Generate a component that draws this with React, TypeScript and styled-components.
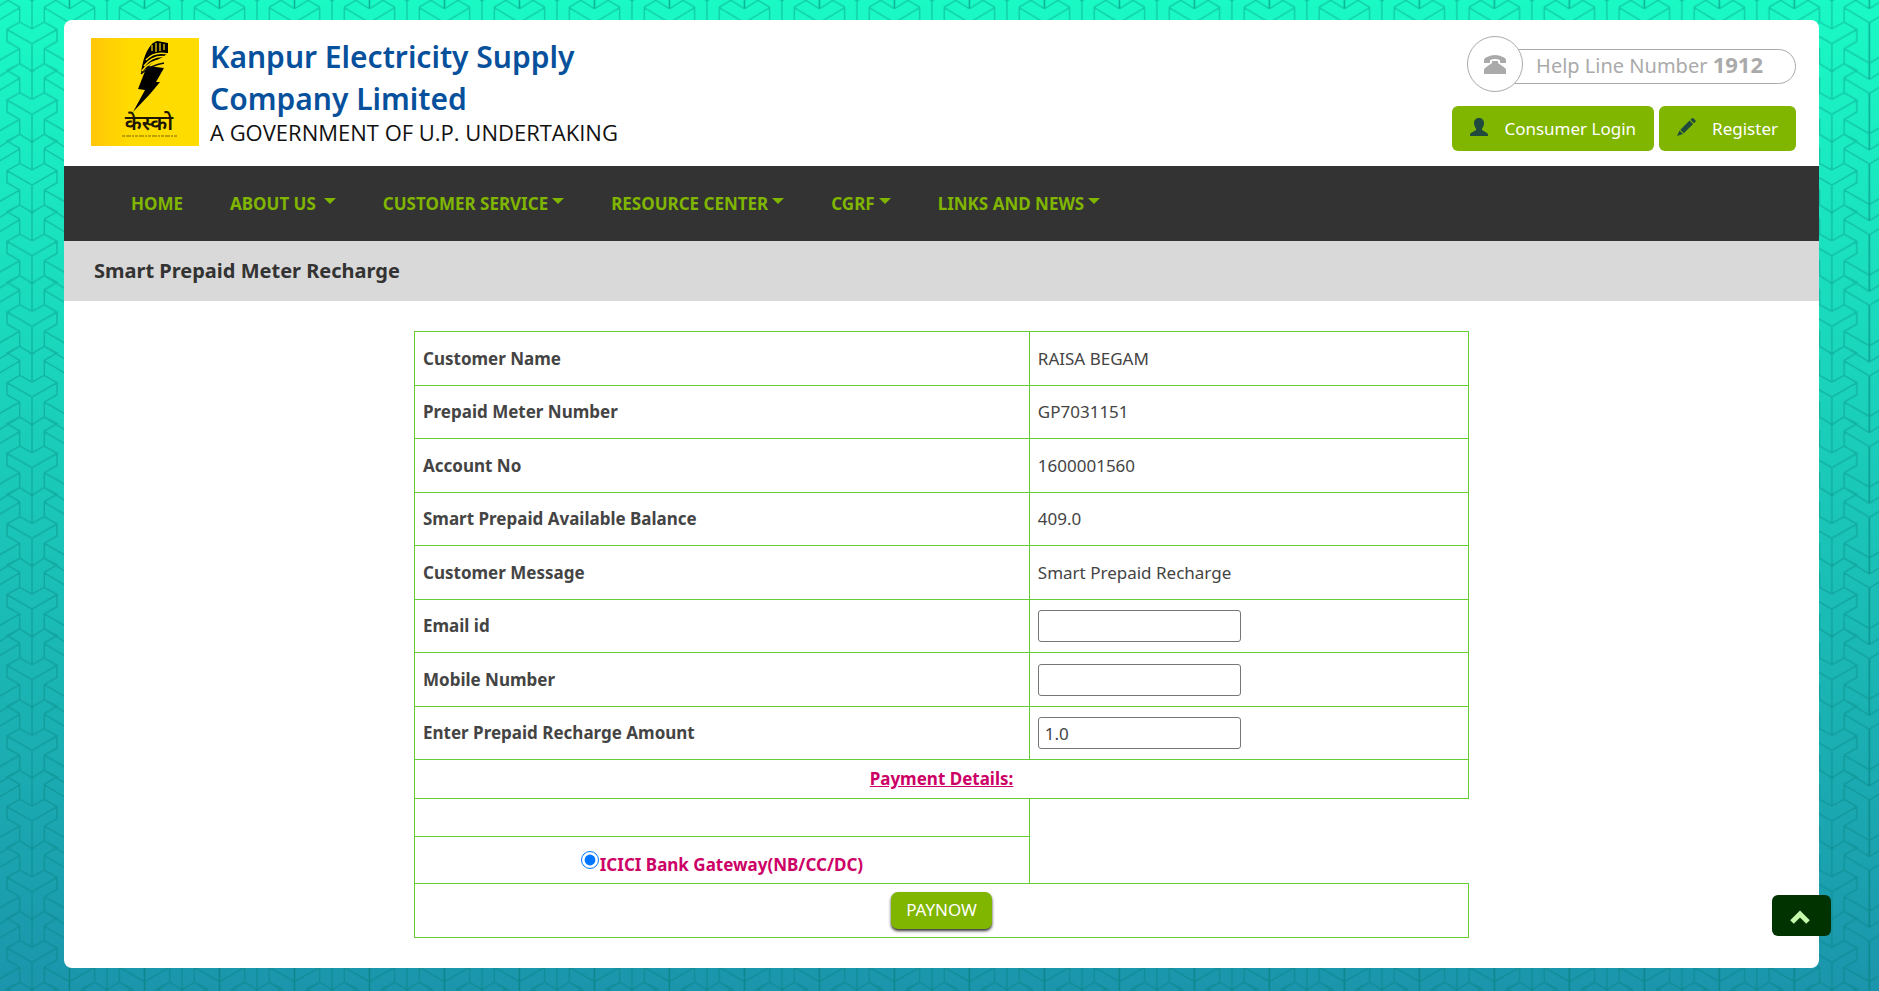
import React from "react";
import styled, { createGlobalStyle, css } from "styled-components";

const GREEN = "#80b500";
const LINE = "#66cc33";

const GlobalStyle = createGlobalStyle`
  *, *::before, *::after { box-sizing: border-box; }
  body {
    margin: 0;
    color: #444;
    font: 17px/24px "Noto Sans", "Open Sans", sans-serif;
    background: #1a95ab;
  }
  #root { display: flow-root; }
`;

const Backdrop = styled.svg`
  position: fixed;
  inset: 0;
  width: 100%;
  height: 100%;
  z-index: -1;
`;

const Page = styled.div`
  margin: 20px 60px 23px 64px;
  background: #fff;
  border-radius: 8px;
  overflow: hidden;
`;

const Header = styled.header`
  display: flex;
  justify-content: space-between;
  align-items: flex-start;
  padding: 16px 23px 15px 27px;
`;

const Brand = styled.a`
  display: flex;
  gap: 11px;
  text-decoration: none;

  svg { margin-top: 2px; }
`;

const BrandText = styled.div`
  display: flex;
  flex-direction: column;
`;

const BrandName = styled.span`
  width: 400px;
  color: #06509c;
  font: 600 30px/42px "Noto Sans", sans-serif;
`;

const BrandNote = styled.span`
  color: #111;
  font: 22px/24px "Open Sans", sans-serif;
  white-space: nowrap;
`;

const Tools = styled.div`
  display: flex;
  flex-direction: column;
  align-items: flex-end;
  gap: 14px;
`;

const HelpLine = styled.div`
  display: flex;
  align-items: center;
  color: #aaa;
`;

const HelpIcon = styled.span`
  display: flex;
  align-items: center;
  justify-content: center;
  width: 56px;
  height: 56px;
  border: 1px solid #aaa;
  border-radius: 50%;
  background: #fff;
  z-index: 1;
`;

const HelpText = styled.span`
  height: 35px;
  margin: 5px 0 0 -10px;
  padding: 0 32px 0 22px;
  border: 1px solid #aaa;
  border-radius: 0 18px 18px 0;
  font-size: 20px;
  line-height: 28px;

  strong { font-size: 22px; }
`;

const Actions = styled.div`
  display: flex;
  gap: 5px;
`;

const ActionButton = styled.button`
  display: flex;
  align-items: center;
  gap: 16px;
  height: 45px;
  padding: 0 18px;
  border: 0;
  border-radius: 6px;
  background: ${GREEN};
  color: #fff;
  font: inherit;

  svg { margin-bottom: 3px; }
`;

const Nav = styled.nav`
  background: #333;
`;

const NavList = styled.ul`
  display: flex;
  align-items: center;
  gap: 47px;
  height: 75px;
  margin: 0;
  padding: 0 67px;
  list-style: none;
`;

const NavLink = styled.a<{ $wide?: boolean }>`
  display: flex;
  align-items: center;
  gap: ${(p) => (p.$wide ? 8 : 4)}px;
  color: ${GREEN};
  font-weight: 700;
  text-decoration: none;
  white-space: nowrap;
`;

const Caret = styled.span`
  margin-bottom: 6px;
  border: 6px solid transparent;
  border-top-color: ${GREEN};
  border-bottom: 0;
`;

const TitleBar = styled.h1`
  margin: 0;
  padding: 0 30px;
  background: #d9d9d9;
  color: #333;
  font-size: 20px;
  line-height: 60px;
`;

const Form = styled.form`
  padding: 30px 0;
`;

const Details = styled.table`
  width: calc(60% + 2px);
  margin: 0 auto;
  border-collapse: collapse;
  table-layout: fixed;
`;

const LabelColumn = styled.col`
  width: calc(100% * 7 / 12);
`;

const cell = css`
  padding: 0 8px;
  border: 1px solid ${LINE};
`;

const Row = styled.tr<{ $height?: number }>`
  height: ${(p) => p.$height ?? 53}px;
  ${(p) => !p.$height && "&:nth-child(odd) { height: 54px; }"}
`;

const LabelCell = styled.th`
  ${cell}
  font-weight: 700;
  text-align: left;
`;

const Cell = styled.td<{ $center?: boolean }>`
  ${cell}
  text-align: ${(p) => (p.$center ? "center" : "left")};
`;

const TextField = styled.input`
  display: block;
  width: 203px;
  height: 32px;
  padding: 0 6px;
  border: 1px solid #767676;
  border-radius: 3px;
  color: #444;
  font: inherit;
`;

const PinkHeading = styled.strong`
  color: #cc0066;
  text-decoration: underline;
`;

const Gateway = styled.label`
  display: inline-flex;
  align-items: flex-start;
  color: #cc0066;
  font-weight: 700;
  padding-top: 8px;

  input { width: 18px; height: 18px; margin: 0 1px 0 0; accent-color: #0075ff; }
  span { padding-top: 2px; }
`;

const PayButton = styled.button`
  height: 37px;
  padding: 0 15px 2px;
  border: 0;
  border-radius: 7px;
  background: ${GREEN};
  color: #fff;
  font: inherit;
  box-shadow: 0 2px 3px #333;
  vertical-align: middle;
`;

const ToTop = styled.a`
  position: fixed;
  right: 48px;
  bottom: 55px;
  display: flex;
  align-items: center;
  justify-content: center;
  width: 59px;
  height: 41px;
  padding: 2px 3px 0 0;
  border-radius: 6px;
  background: #003300;
`;

const tile =
  "M0 -85V0M0 45V127" +
  "M-37 -65V-20L0 0L37 -20V-65" +
  "M-37 -20L-75 2L0 45L75 2L37 -20" +
  "M-75 2V38L-37 60V105M75 2V38L37 60V105" +
  "M-112 -18L-37 -63M112 -18L37 -63" +
  "M-112 -18V152M112 -18V152" +
  "M-37 60L-112 103M37 60L112 103" +
  "M-37 105L-112 152M37 105L112 152" +
  "M-37 105L0 127L37 105M-37 105L-75 125L-37 147M37 105L75 125L37 147M-7 127H7";

function PatternBackdrop() {
  return (
    <Backdrop aria-hidden="true">
      <defs>
        <linearGradient id="sea" x1="0" y1="0" x2="0" y2="1">
          <stop offset="0" stopColor="#1afac5" />
          <stop offset="1" stopColor="#1b95ac" />
        </linearGradient>
        <pattern
          id="weave"
          width="225"
          height="212"
          patternUnits="userSpaceOnUse"
          patternTransform="translate(32 28.7) scale(.3333)"
        >
          <g fill="none" stroke="#007870" strokeOpacity=".32" strokeWidth="4.500">
            {[0, 225].map((x) =>
              [-212, 0, 212].map((y) => (
                <path key={`${x}:${y}`} d={tile} transform={`translate(${x} ${y})`} />
              ))
            )}
          </g>
        </pattern>
      </defs>
      <rect width="100%" height="100%" fill="url(#sea)" />
      <rect width="100%" height="100%" fill="url(#weave)" />
    </Backdrop>
  );
}

function Emblem() {
  return (
    <svg width="108" height="108" viewBox="0 0 108 108" role="img" aria-label="KESCO">
      <defs>
        <linearGradient id="gold">
          <stop offset="0" stopColor="#ffc608" />
          <stop offset=".35" stopColor="#ffdb00" />
          <stop offset="1" stopColor="#ffdc00" />
        </linearGradient>
      </defs>
      <rect width="108" height="108" fill="url(#gold)" />
      <path d="M56 28L73 30L65 44H69L59 56L42 74L54 52L47 51Z" />
      <path d="M50 36C51 23 56 10 62 5L66 3L77 5V15L72 19Q60 24 50 36Z" />
      <g fill="none" stroke="#ffdc00">
        <path d="M61 7V13M65 5V14M69 5V13M73 6V12" strokeWidth="1.2" />
        <path d="M55 22Q63 13 77 16M53 28Q62 16 77 19M51 33Q60 21 73 22" strokeWidth="1.5" />
      </g>
      <path d="M50 36Q60 27 73 25" fill="none" stroke="#111" strokeWidth="1.5" />
      <text x="58" y="92" textAnchor="middle" fontSize="21" fontWeight="600" fontFamily="Noto Sans, sans-serif" fill="#1d1600">
        केस्को
      </text>
      <path d="M31 98H86" stroke="#8f7600" strokeOpacity=".6" strokeWidth="2" strokeDasharray="3 1 5 1 2 1" />
    </svg>
  );
}

const PhoneIcon = () => (
  <svg width="22" height="19" viewBox="0 0 22 19" fill="#aaa" aria-hidden="true">
    <path d="M0 8V5Q0 3 3 2Q11-2 19 2Q22 3 22 5V8H16V5Q11 3 6 5V8Z" />
    <path d="M8 6H14V8L21 13Q22 14 22 15V19H0V15Q0 14 1 13L8 8Z" />
  </svg>
);

const UserIcon = () => (
  <svg width="18" height="18" viewBox="0 0 18 18" fill="#1f4a3d" aria-hidden="true">
    <path d="M9 0C12 0 14 2 14 5C14 8 13 9 12 10.500V12L17 15Q18 15.500 18 17V18H0V17Q0 15.500 1 15L6 12V10.500C5 9 4 8 4 5C4 2 6 0 9 0Z" />
  </svg>
);

const PencilIcon = () => (
  <svg width="19" height="18" viewBox="0 0 19 18" fill="#1f4a3d" aria-hidden="true">
    <path d="M13.500 1.700L15 .3Q15.700-.3 16.400.3L18.500 2.400Q19.200 3.100 18.500 3.800L17 5.200ZM12.600 2.600L16.100 6.100L6.800 15.200L3.300 11.700ZM2.500 12.600L6 16L0 18Z" />
  </svg>
);

const menu = [
  { text: "HOME" },
  { text: "ABOUT US", caret: true, wide: true },
  { text: "CUSTOMER SERVICE", caret: true },
  { text: "RESOURCE CENTER", caret: true },
  { text: "CGRF", caret: true },
  { text: "LINKS AND NEWS", caret: true },
];

const facts = [
  ["Customer Name", "RAISA BEGAM"],
  ["Prepaid Meter Number", "GP7031151"],
  ["Account No", "1600001560"],
  ["Smart Prepaid Available Balance", "409.0"],
  ["Customer Message", "Smart Prepaid Recharge"],
];

const fields = [
  { id: "email", label: "Email id", type: "email", value: "" },
  { id: "mobile", label: "Mobile Number", type: "tel", value: "" },
  { id: "amount", label: "Enter Prepaid Recharge Amount", type: "text", value: "1.0" },
];

export default function App() {
  return (
    <>
      <GlobalStyle />
      <PatternBackdrop />
      <Page>
        <Header>
          <Brand href="#">
            <Emblem />
            <BrandText>
              <BrandName>Kanpur Electricity Supply Company Limited</BrandName>
              <BrandNote>A GOVERNMENT OF U.P. UNDERTAKING</BrandNote>
            </BrandText>
          </Brand>
          <Tools>
            <HelpLine>
              <HelpIcon>
                <PhoneIcon />
              </HelpIcon>
              <HelpText>
                Help Line Number <strong>1912</strong>
              </HelpText>
            </HelpLine>
            <Actions>
              <ActionButton type="button">
                <UserIcon />
                Consumer Login
              </ActionButton>
              <ActionButton type="button">
                <PencilIcon />
                Register
              </ActionButton>
            </Actions>
          </Tools>
        </Header>
        <Nav>
          <NavList>
            {menu.map((item) => (
              <li key={item.text}>
                <NavLink href="#" $wide={item.wide}>
                  {item.text}
                  {item.caret && <Caret />}
                </NavLink>
              </li>
            ))}
          </NavList>
        </Nav>
        <TitleBar>Smart Prepaid Meter Recharge</TitleBar>
        <Form>
          <Details>
            <colgroup>
              <LabelColumn />
              <col />
            </colgroup>
            <tbody>
              {facts.map(([label, value]) => (
                <Row key={label}>
                  <LabelCell scope="row">{label}</LabelCell>
                  <Cell>{value}</Cell>
                </Row>
              ))}
              {fields.map((f) => (
                <Row key={f.id}>
                  <LabelCell scope="row">
                    <label htmlFor={f.id}>{f.label}</label>
                  </LabelCell>
                  <Cell>
                    <TextField id={f.id} type={f.type} defaultValue={f.value} />
                  </Cell>
                </Row>
              ))}
              <Row $height={39}>
                <Cell colSpan={2} $center>
                  <PinkHeading>Payment Details:</PinkHeading>
                </Cell>
              </Row>
              <Row $height={38}>
                <Cell />
              </Row>
              <Row $height={47}>
                <Cell $center>
                  <Gateway>
                    <input type="radio" name="gateway" defaultChecked />
                    <span>ICICI Bank Gateway(NB/CC/DC)</span>
                  </Gateway>
                </Cell>
              </Row>
              <Row $height={54}>
                <Cell colSpan={2} $center>
                  <PayButton type="button">PAYNOW</PayButton>
                </Cell>
              </Row>
            </tbody>
          </Details>
        </Form>
      </Page>
      <ToTop href="#" aria-label="Back to top">
        <svg width="20" height="14" viewBox="0 0 20 14" fill="none" stroke="#c5f9ac" strokeWidth="5" aria-hidden="true">
          <path d="M2 12L10 4L18 12" />
        </svg>
      </ToTop>
    </>
  );
}
